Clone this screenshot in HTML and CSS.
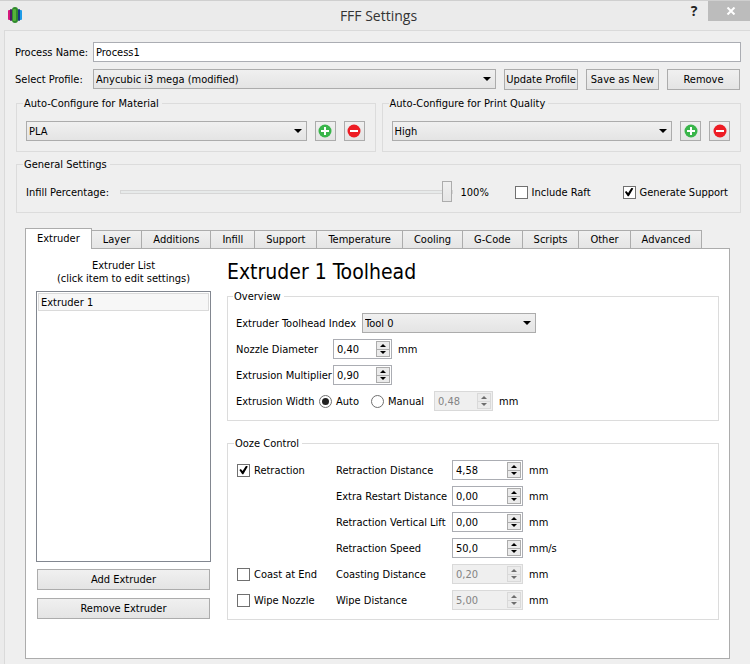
FILE: index.html
```html
<!DOCTYPE html>
<html lang="en">
<head>
    <meta charset="UTF-8">
    <meta name="viewport" content="width=device-width, initial-scale=1.0">
    <title>FFF Settings</title>
    <link rel="stylesheet" href="styles.css">
</head>
<body>
    <header class="titlebar">
        <svg class="logo" width="16" height="16" viewBox="0 0 16 16">
            <rect x="1" y="3" width="4" height="10" rx="1" fill="#d6187c"/>
            <rect x="3" y="2" width="2" height="12" rx="1" fill="#4a1d66"/>
            <rect x="11" y="3" width="4" height="10" rx="1" fill="#1e9be8"/>
            <rect x="11" y="2" width="2" height="12" rx="1" fill="#153a80"/>
            <rect x="5" y="0" width="6" height="16" rx="3" fill="#2f8a2c"/>
            <rect x="6" y="2" width="3" height="12" rx="1" fill="#56b33c"/>
        </svg>
        <h1>FFF Settings</h1>
        <div class="window-buttons">
            <button class="help" type="button" aria-label="Help">?</button>
            <button class="close" type="button" aria-label="Close">
                <svg width="10" height="8" viewBox="0 0 10 8"><path d="M1.5 0.5 L8.5 7.5 M8.5 0.5 L1.5 7.5" stroke="#fff" stroke-width="2"/></svg>
            </button>
        </div>
    </header>

    <main class="dialog">
        <div class="profile">
            <label for="process">Process Name:</label>
            <input class="text" type="text" id="process" value="Process1">
            <label for="profile">Select Profile:</label>
            <div class="profile-row">
                <span class="select"><select id="profile"><option>Anycubic i3 mega (modified)</option></select></span>
                <button class="btn" type="button">Update Profile</button>
                <button class="btn" type="button">Save as New</button>
                <button class="btn" type="button">Remove</button>
            </div>
        </div>

        <div class="auto-configure">
            <fieldset>
                <legend>Auto-Configure for Material</legend>
                <div class="auto-row">
                    <span class="select"><select aria-label="Material"><option>PLA</option></select></span>
                    <button class="btn icon" type="button" aria-label="Add material">
                        <svg width="14" height="14" viewBox="0 0 14 14"><circle cx="7" cy="7" r="6.5" fill="#39b54a"/><path d="M7 3 V11 M3 7 H11" stroke="#fff" stroke-width="2"/></svg>
                    </button>
                    <button class="btn icon" type="button" aria-label="Remove material">
                        <svg width="14" height="14" viewBox="0 0 14 14"><circle cx="7" cy="7" r="6.5" fill="#ed1c24"/><path d="M3 7 H11" stroke="#fff" stroke-width="2"/></svg>
                    </button>
                </div>
            </fieldset>
            <fieldset>
                <legend>Auto-Configure for Print Quality</legend>
                <div class="auto-row">
                    <span class="select"><select aria-label="Print quality"><option>High</option></select></span>
                    <button class="btn icon" type="button" aria-label="Add quality">
                        <svg width="14" height="14" viewBox="0 0 14 14"><circle cx="7" cy="7" r="6.5" fill="#39b54a"/><path d="M7 3 V11 M3 7 H11" stroke="#fff" stroke-width="2"/></svg>
                    </button>
                    <button class="btn icon" type="button" aria-label="Remove quality">
                        <svg width="14" height="14" viewBox="0 0 14 14"><circle cx="7" cy="7" r="6.5" fill="#ed1c24"/><path d="M3 7 H11" stroke="#fff" stroke-width="2"/></svg>
                    </button>
                </div>
            </fieldset>
        </div>

        <fieldset class="general">
            <legend>General Settings</legend>
            <div class="general-row">
                <label class="infill-label" for="infill">Infill Percentage:</label>
                <input type="range" id="infill" min="0" max="100" value="100">
                <output id="infill-value" for="infill">100%</output>
                <label class="check raft"><input type="checkbox">Include Raft</label>
                <label class="check"><input type="checkbox" checked>Generate Support</label>
            </div>
        </fieldset>

        <div class="tabs" role="tablist">
            <button class="tab active" type="button" role="tab" aria-selected="true">Extruder</button>
            <button class="tab" type="button" role="tab">Layer</button>
            <button class="tab" type="button" role="tab">Additions</button>
            <button class="tab" type="button" role="tab">Infill</button>
            <button class="tab" type="button" role="tab">Support</button>
            <button class="tab" type="button" role="tab">Temperature</button>
            <button class="tab" type="button" role="tab">Cooling</button>
            <button class="tab" type="button" role="tab">G-Code</button>
            <button class="tab" type="button" role="tab">Scripts</button>
            <button class="tab" type="button" role="tab">Other</button>
            <button class="tab" type="button" role="tab">Advanced</button>
        </div>

        <section class="panel">
            <div class="extruders">
                <p>Extruder List<br>(click item to edit settings)</p>
                <ul>
                    <li>Extruder 1</li>
                </ul>
                <button class="btn" type="button">Add Extruder</button>
                <button class="btn" type="button">Remove Extruder</button>
            </div>

            <div class="toolhead">
                <h2>Extruder 1 Toolhead</h2>

                <fieldset class="overview">
                    <legend>Overview</legend>
                    <div class="row">
                        <label class="label-index" for="tool">Extruder Toolhead Index</label>
                        <span class="select tool"><select id="tool"><option>Tool 0</option></select></span>
                    </div>
                    <div class="row">
                        <label class="label-value" for="nozzle">Nozzle Diameter</label>
                        <span class="spin"><input type="text" id="nozzle" value="0,40"><span class="steps"><button type="button" aria-label="Up"></button><button type="button" aria-label="Down"></button></span></span>
                        <span class="unit">mm</span>
                    </div>
                    <div class="row">
                        <label class="label-value" for="multiplier">Extrusion Multiplier</label>
                        <span class="spin"><input type="text" id="multiplier" value="0,90"><span class="steps"><button type="button" aria-label="Up"></button><button type="button" aria-label="Down"></button></span></span>
                    </div>
                    <div class="row">
                        <label class="label-width" for="width">Extrusion Width</label>
                        <label class="check radio-auto"><input type="radio" name="mode" checked>Auto</label>
                        <label class="check radio-manual"><input type="radio" name="mode">Manual</label>
                        <span class="spin"><input type="text" id="width" value="0,48" disabled><span class="steps"><button type="button" aria-label="Up" disabled></button><button type="button" aria-label="Down" disabled></button></span></span>
                        <span class="unit">mm</span>
                    </div>
                </fieldset>

                <fieldset class="ooze">
                    <legend>Ooze Control</legend>
                    <div class="ooze-grid">
                        <label class="check"><input type="checkbox" checked>Retraction</label>
                        <label for="distance">Retraction Distance</label>
                        <span class="spin"><input type="text" id="distance" value="4,58"><span class="steps"><button type="button" aria-label="Up"></button><button type="button" aria-label="Down"></button></span></span>
                        <span class="unit">mm</span>

                        <label class="second" for="restart">Extra Restart Distance</label>
                        <span class="spin"><input type="text" id="restart" value="0,00"><span class="steps"><button type="button" aria-label="Up"></button><button type="button" aria-label="Down"></button></span></span>
                        <span class="unit">mm</span>

                        <label class="second" for="lift">Retraction Vertical Lift</label>
                        <span class="spin"><input type="text" id="lift" value="0,00"><span class="steps"><button type="button" aria-label="Up"></button><button type="button" aria-label="Down"></button></span></span>
                        <span class="unit">mm</span>

                        <label class="second" for="speed">Retraction Speed</label>
                        <span class="spin"><input type="text" id="speed" value="50,0"><span class="steps"><button type="button" aria-label="Up"></button><button type="button" aria-label="Down"></button></span></span>
                        <span class="unit">mm/s</span>

                        <label class="check"><input type="checkbox">Coast at End</label>
                        <label for="coast">Coasting Distance</label>
                        <span class="spin"><input type="text" id="coast" value="0,20" disabled><span class="steps"><button type="button" aria-label="Up" disabled></button><button type="button" aria-label="Down" disabled></button></span></span>
                        <span class="unit">mm</span>

                        <label class="check"><input type="checkbox">Wipe Nozzle</label>
                        <label for="wipe">Wipe Distance</label>
                        <span class="spin"><input type="text" id="wipe" value="5,00" disabled><span class="steps"><button type="button" aria-label="Up" disabled></button><button type="button" aria-label="Down" disabled></button></span></span>
                        <span class="unit">mm</span>
                    </div>
                </fieldset>
            </div>
        </section>
    </main>
</body>
</html>
```
FILE: styles.css
```css
* {
    box-sizing: border-box;
}

body {
    margin: 0;
    background-color: #ebebeb;
    border-top: 1px solid #cfcfcf;
    color: #000;
    min-height: 100vh;
    display: flex;
    flex-direction: column;
}

body, button, input, select {
    font-family: "DejaVu Sans Condensed", Tahoma, sans-serif;
    font-size: 11px;
    line-height: 13px;
}

h1, h2, p, ul {
    margin: 0;
    padding: 0;
    font-weight: normal;
}

/* title bar */
.titlebar {
    display: grid;
    grid-template-columns: 1fr auto 1fr;
    height: 29px;
    padding-left: 7px;
}

.logo {
    margin-top: 6px;
}

.titlebar h1 {
    font-family: "Open Sans", sans-serif;
    font-size: 14px;
    line-height: 29px;
    color: #333;
}

.window-buttons {
    display: flex;
    justify-content: flex-end;
    align-items: flex-start;
}

.window-buttons button {
    border: none;
    padding: 0;
    height: 20px;
    background: none;
}

.window-buttons .help {
    width: 28px;
    font-family: "Open Sans", sans-serif;
    font-size: 14px;
    line-height: 20px;
    font-weight: bold;
    color: #222;
}

.window-buttons .close {
    width: 42px;
    padding-left: 4px;
    background-color: #bcbcbc;
}

.dialog {
    flex: 1;
    margin-left: 4px;
    padding: 11px 9px 6px 10px;
    border: 1px solid #dadada;
    border-width: 1px 0 0 1px;
    background-color: #efefef;
}

/* controls */
.btn {
    height: 21px;
    padding: 0;
    border: 1px solid #acacac;
    background: linear-gradient(#f0f0f0, #e4e4e4);
    color: #000;
    white-space: nowrap;
}

.icon {
    width: 21px;
    height: 20px;
    display: flex;
    align-items: center;
    justify-content: center;
}

.text {
    width: 100%;
    height: 20px;
    padding: 1px 2px 0;
    border: 1px solid #abadb3;
    background-color: #fff;
}

.select {
    position: relative;
    flex: 1;
    display: flex;
}

.select select {
    appearance: none;
    width: 100%;
    height: 20px;
    margin: 0;
    padding: 1px 20px 0 2px;
    border: 1px solid #acacac;
    border-radius: 0;
    background: linear-gradient(#f0f0f0, #e4e4e4);
    color: #000;
}

.select::after {
    content: "";
    position: absolute;
    right: 5px;
    top: 8px;
    border: 4px solid transparent;
    border-top-color: #000;
    border-bottom: none;
    pointer-events: none;
}

.check {
    display: flex;
    align-items: center;
    gap: 4px;
    white-space: nowrap;
}

.check input {
    appearance: none;
    position: relative;
    width: 13px;
    height: 13px;
    margin: 0;
    border: 1px solid #707070;
    background-color: #fff;
}

.check input[type="radio"] {
    border-radius: 50%;
}

.check input:checked::after {
    content: "";
    position: absolute;
    inset: 1px;
    background-color: #000;
    clip-path: polygon(4% 50%, 20% 38%, 40% 62%, 78% 4%, 98% 12%, 48% 98%, 36% 98%);
}

.check input[type="radio"]:checked::after {
    inset: 2px;
    border-radius: 50%;
    background-color: #212121;
    clip-path: none;
}

.spin {
    display: flex;
    width: 59px;
    height: 20px;
    padding: 1px;
    border: 1px solid #abadb3;
    background-color: #fff;
}

.spin input {
    flex: 1;
    min-width: 0;
    padding: 1px 0 0 2px;
    border: none;
    background: none;
}

.steps {
    width: 14px;
    display: flex;
    flex-direction: column;
}

.steps button {
    flex: 1;
    display: flex;
    align-items: center;
    justify-content: center;
    padding: 0;
    border: 1px solid #acacac;
    background-color: #ebebeb;
}

.steps button + button {
    margin-top: -1px;
}

.steps button::after {
    content: "";
    border: 3px solid transparent;
    border-bottom-color: #000;
    border-top: none;
}

.steps button + button::after {
    border-top: 3px solid #000;
    border-bottom: none;
}

.spin:has(:disabled) {
    border-color: #d9d9d9;
    background-color: #efefef;
}

.spin input:disabled {
    color: #838383;
}

.steps button:disabled {
    border-color: #d9d9d9;
}

.steps button:disabled::after {
    border-bottom-color: #6d6d6d;
}

.steps button + button:disabled::after {
    border-top-color: #6d6d6d;
}

fieldset {
    min-width: 0;
    margin: 0;
    padding: 10px 9px 9px;
    border: 1px solid #dcdcdc;
}

legend {
    margin-left: -3px;
    padding: 0 3px 0 1px;
}

/* profile */
.profile {
    display: grid;
    grid-template-columns: 78px 1fr;
    gap: 7px 0;
    align-items: center;
}

.profile-row {
    display: grid;
    grid-template-columns: 1fr 74px 73px 73px;
    gap: 8px;
    padding-right: 1px;
}

.auto-configure {
    display: grid;
    grid-template-columns: 1fr 1fr;
    gap: 6px;
    margin: 7px 0 6px 1px;
}

.auto-configure fieldset {
    padding: 11px 10px 10px 9px;
}

.auto-row {
    display: flex;
    gap: 8px;
}

/* general settings */
.general {
    margin-left: 1px;
}

.general-row {
    display: flex;
    align-items: center;
    height: 22px;
    padding-right: 3px;
}

.infill-label {
    width: 94px;
}

input[type="range"] {
    appearance: none;
    flex: 1;
    min-width: 0;
    height: 21px;
    margin: 0;
    background: none;
}

input[type="range"]::-webkit-slider-runnable-track {
    height: 4px;
    border: 1px solid #d6d6d6;
    background-color: #e7eaea;
}

input[type="range"]::-webkit-slider-thumb {
    appearance: none;
    width: 10px;
    height: 21px;
    margin-top: -10px;
    border: 1px solid #acacac;
    background: linear-gradient(#f0f0f0, #e5e5e5);
}

#infill-value {
    width: 62px;
    padding-left: 8px;
}

.raft {
    width: 108px;
}

/* tabs */
.tabs {
    display: flex;
    align-items: flex-end;
    margin: 15px 0 0 10px;
}

.tab {
    height: 18px;
    margin-left: -1px;
    padding: 0 11px;
    border: 1px solid #acacac;
    border-bottom: none;
    background: linear-gradient(#f0f0f0, #e5e5e5);
    color: #000;
}

.tab.active {
    position: relative;
    height: 21px;
    margin: 0 0 -1px;
    padding-bottom: 2px;
    background: #fff;
}

.panel {
    display: grid;
    grid-template-columns: 175px 1fr;
    gap: 16px;
    margin: 0 11px 0 10px;
    padding: 10px 10px 38px;
    border: 1px solid #acacac;
    background-color: #fff;
}

.extruders {
    display: flex;
    flex-direction: column;
}

.extruders p {
    margin-bottom: 6px;
    text-align: center;
}

.extruders ul {
    flex: 1;
    padding: 1px;
    border: 1px solid #828790;
    list-style: none;
}

.extruders li {
    height: 18px;
    padding: 2px;
    border: 1px solid #dadada;
    background-color: #f7f7f7;
}

.extruders .btn {
    margin: 7px 1px 1px;
}

/* toolhead settings */
.toolhead h2 {
    margin-bottom: 5px;
    font-size: 21px;
    line-height: 26px;
}

.overview {
    display: flex;
    flex-direction: column;
    margin-bottom: 16px;
    padding-left: 8px;
}

.row {
    display: flex;
    align-items: center;
    height: 20px;
    margin-bottom: 6px;
}

.row:last-child {
    margin-bottom: 0;
}

.label-index {
    width: 126px;
}

.label-value {
    width: 97px;
}

.label-width {
    width: 83px;
}

.tool {
    flex: none;
    width: 174px;
}

.radio-auto {
    width: 52px;
}

.radio-manual {
    width: 63px;
}

.unit {
    padding-left: 6px;
}

.ooze-grid {
    display: grid;
    grid-template-columns: 99px 116px 71px 1fr;
    row-gap: 6px;
    align-items: center;
}

.ooze-grid .spin {
    width: 100%;
}

.ooze-grid .second {
    grid-column: 2;
}
```
